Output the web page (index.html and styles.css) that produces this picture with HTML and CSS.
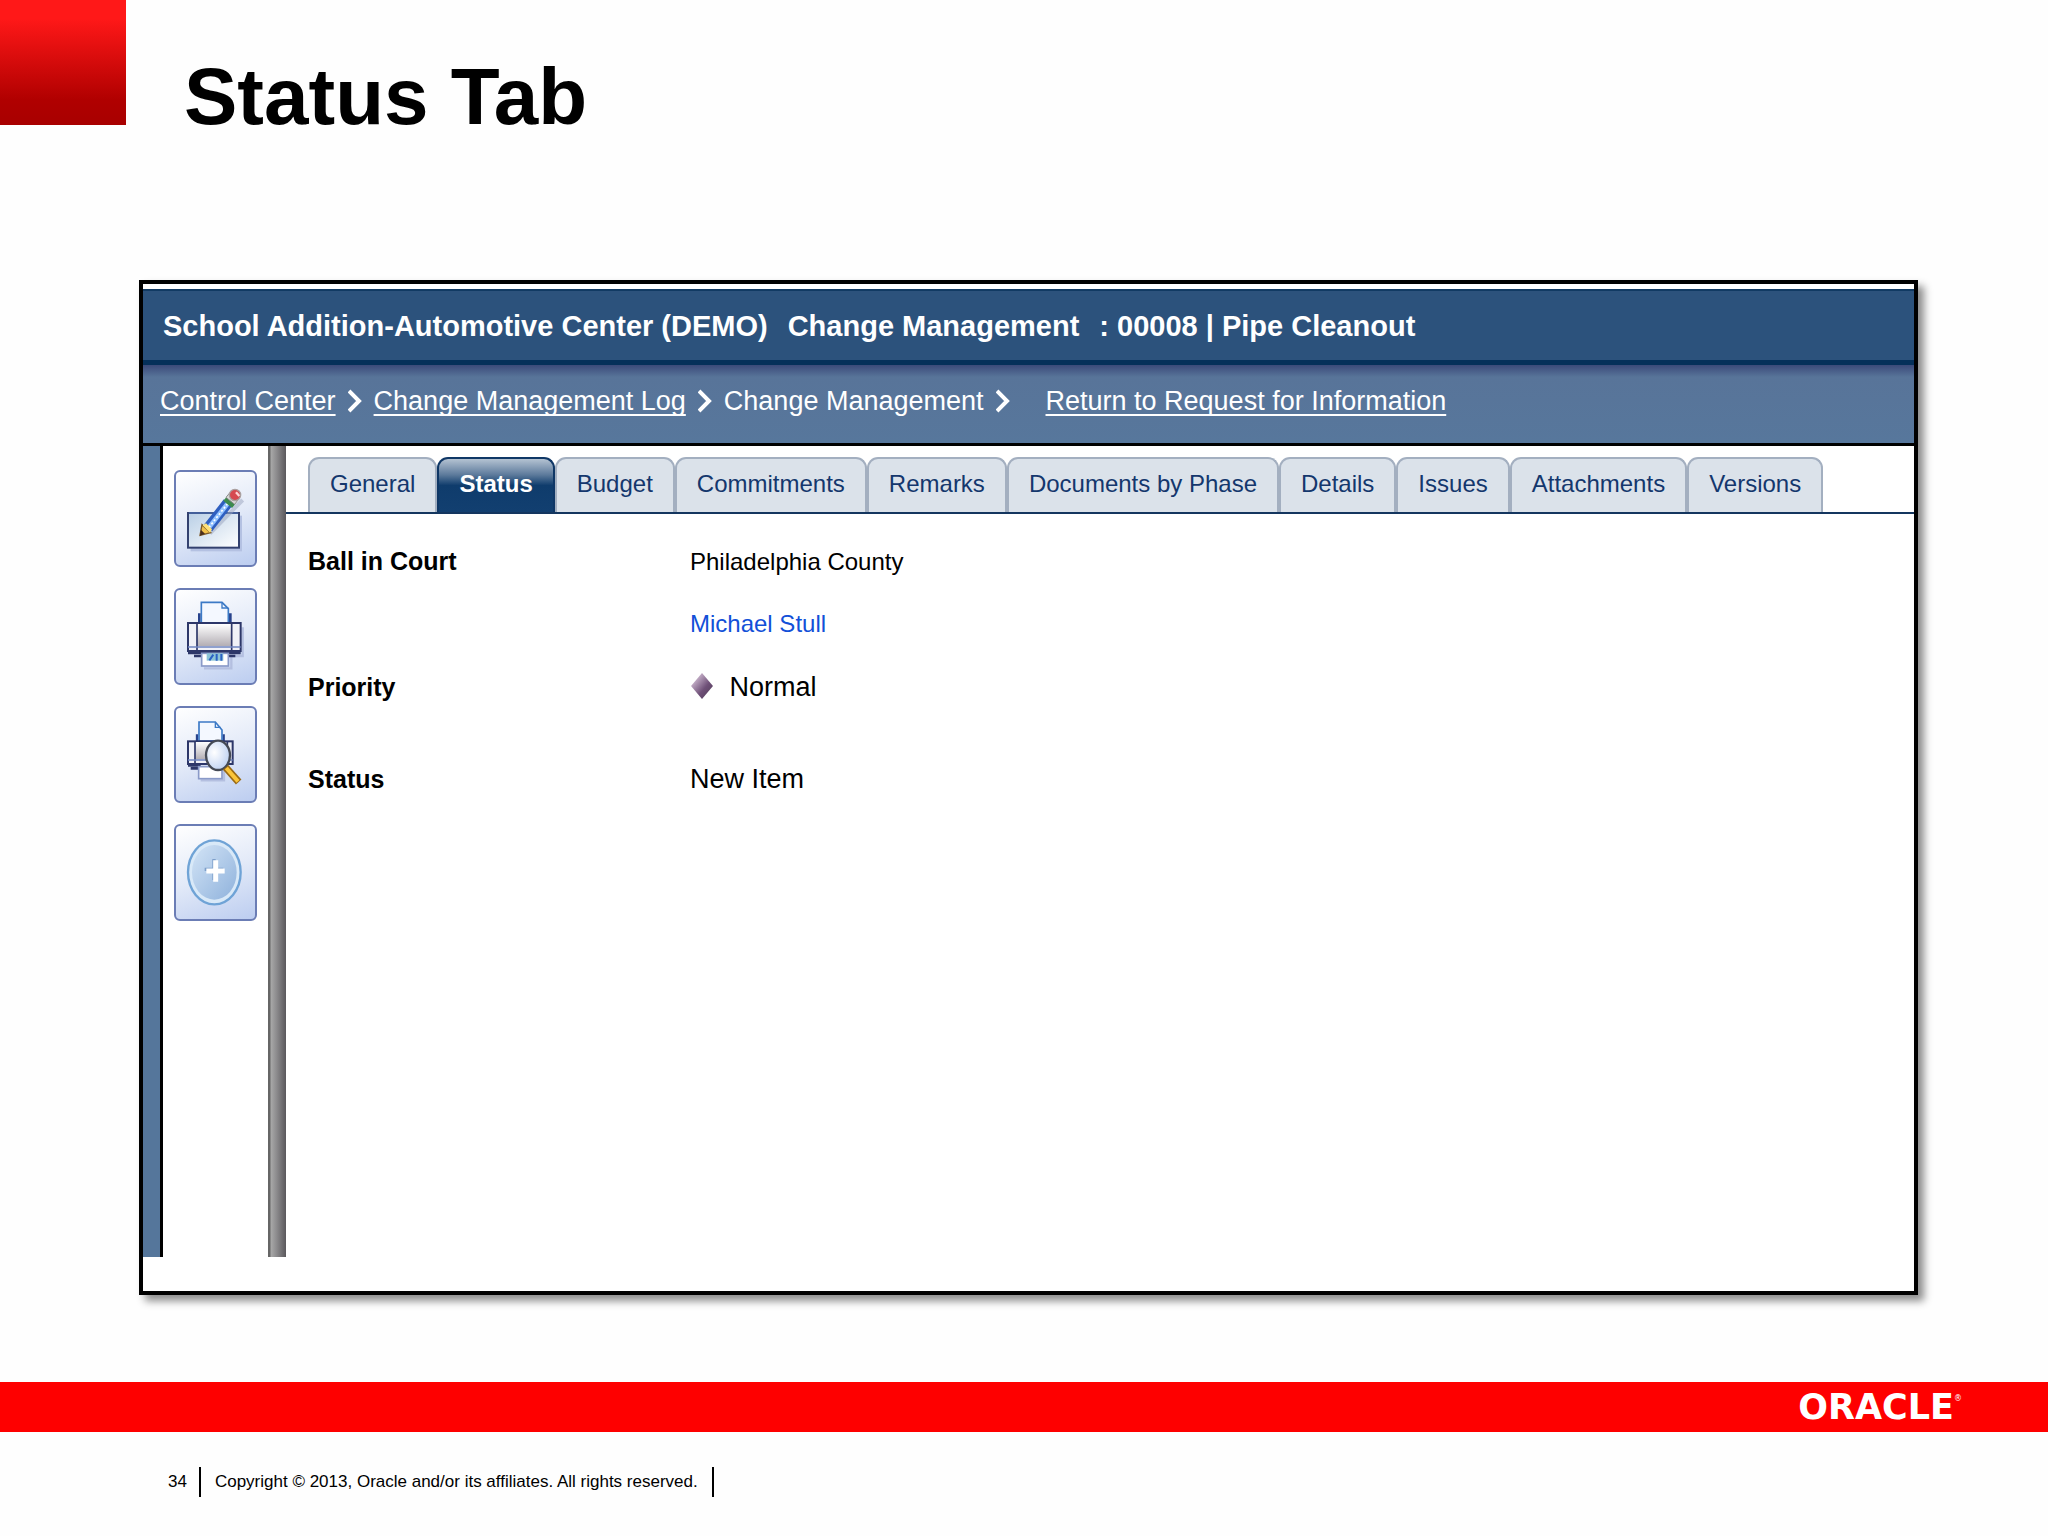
FILE: index.html
```html
<!DOCTYPE html>
<html lang="en">

<head>
    <meta charset="utf-8">
    <title>Status Tab</title>
    <link rel="stylesheet" href="styles.css">
</head>

<body>
    <header class="slide-header">
        <div class="red-square"></div>
        <h1 class="slide-title">Status Tab</h1>
    </header>

    <main class="frame">
        <div class="titlebar">
            <span>School Addition-Automotive Center (DEMO)</span>
            <span>Change Management</span>
            <span>: 00008 | Pipe Cleanout</span>
        </div>

        <nav class="breadcrumb">
            <a href="#">Control Center</a>
            <svg class="chevron" viewBox="0 0 14 26"><path d="M1 3 L11 13 L1 23" /></svg>
            <a href="#">Change Management Log</a>
            <svg class="chevron" viewBox="0 0 14 26"><path d="M1 3 L11 13 L1 23" /></svg>
            <span>Change Management</span>
            <svg class="chevron" viewBox="0 0 14 26"><path d="M1 3 L11 13 L1 23" /></svg>
            <a class="return-link" href="#">Return to Request for Information</a>
        </nav>

        <div class="workspace">
            <div class="sidebar">
                <button class="tool" type="button" aria-label="Edit">
                    <svg viewBox="0 0 249 291">
                        <defs>
                            <linearGradient id="pad" x1="0" y1="0" x2="1" y2="1">
                                <stop offset="0" stop-color="#b9cfe6" />
                                <stop offset="1" stop-color="#ffffff" />
                            </linearGradient>
                        </defs>
                        <rect x="50" y="137" width="154" height="107" fill="#b4c1e2" />
                        <rect x="42" y="129" width="153" height="104" fill="url(#pad)" stroke="#33416f" stroke-width="6" />
                        <path d="M45 129 H192" stroke="#4a6aa8" stroke-width="5" />
                        <path d="M108 190 L206 90" stroke="#9aa3bd" stroke-width="12" opacity=".5" />
                        <path d="M102 174 L162 98" stroke="#2f5fc0" stroke-width="32" />
                        <path d="M105 172 L163 98" stroke="#8fc0ff" stroke-width="14" />
                        <path d="M105 172 L163 98" stroke="#ffffff" stroke-width="5" stroke-dasharray="6 6" />
                        <path d="M78 196 L84 164 L110 188 Z" fill="#f2c14a" stroke="#7c5a2a" stroke-width="4" />
                        <path d="M86 166 L96 160 L114 178 L108 188 Z" fill="#ffe27a" />
                        <path d="M78 197 L81 180 L93 191 Z" fill="#4a2d1e" />
                        <path d="M148 92 L158 80 L184 102 L174 114 Z" fill="#3c8a4e" />
                        <path d="M156 82 L166 70 L192 90 L182 103 Z" fill="#d9d9d9" stroke="#8d8d8d" stroke-width="3" />
                        <ellipse cx="183" cy="75" rx="17" ry="17" fill="#d64a50" stroke="#a9a0a0" stroke-width="4" />
                        <path d="M186 67 L196 78" stroke="#ffd5d5" stroke-width="7" />
                    </svg>
                </button>
                <button class="tool" type="button" aria-label="Print">
                    <svg viewBox="0 0 249 291">
                        <defs>
                            <linearGradient id="body" x1="0" y1="0" x2="0" y2="1">
                                <stop offset="0" stop-color="#ffffff" />
                                <stop offset="1" stop-color="#b3aeb4" />
                            </linearGradient>
                        </defs>
                        <path d="M206 118 V204 H172 V241 H90" fill="none" stroke="#b4bfe0" stroke-width="7" />
                        <path d="M76 76 V105 M169 76 V105" stroke="#27428c" stroke-width="8" />
                        <path d="M82 105 V43 H144 L163 62 V105 Z" fill="#f4f8ff" stroke="#3c7ac6" stroke-width="5" />
                        <path d="M144 43 V60 H163" fill="none" stroke="#3c7ac6" stroke-width="4" />
                        <rect x="42" y="105" width="158" height="84" fill="#f0f1f7" stroke="#2d3769" stroke-width="6" />
                        <rect x="69" y="108" width="103" height="66" fill="url(#body)" />
                        <path d="M69 105 V190 M173 105 V190" stroke="#2d3769" stroke-width="5" />
                        <path d="M42 177 H200" stroke="#6f84c0" stroke-width="5" />
                        <path d="M42 194 H200" stroke="#2d3769" stroke-width="10" />
                        <path d="M60 204 H84 M164 204 H184" stroke="#2d3769" stroke-width="8" />
                        <rect x="83" y="196" width="80" height="38" fill="#ffffff" stroke="#8a9ac8" stroke-width="5" />
                        <rect x="98" y="196" width="50" height="22" fill="#8cc4d6" />
                        <path d="M106 217 L118 200 M128 198 V218 M142 198 V218" stroke="#2b62c4" stroke-width="6" />
                    </svg>
                </button>
                <button class="tool" type="button" aria-label="Print preview">
                    <svg viewBox="0 0 249 291">
                        <defs>
                            <radialGradient id="lens" cx=".35" cy=".4" r=".7">
                                <stop offset="0" stop-color="#ffffff" />
                                <stop offset="1" stop-color="#bcd0f2" />
                            </radialGradient>
                        </defs>
                        <path d="M150 190 V223 H80" fill="none" stroke="#b4bfe0" stroke-width="7" />
                        <path d="M69 85 V105 M149 85 V105" stroke="#27428c" stroke-width="7" />
                        <path d="M75 105 V48 H124 L144 72 V105 Z" fill="#f4f8ff" stroke="#3c7ac6" stroke-width="5" />
                        <path d="M124 48 V64 H140" fill="none" stroke="#3c7ac6" stroke-width="4" />
                        <rect x="42" y="106" width="134" height="68" fill="#f0f1f7" stroke="#2d3769" stroke-width="6" />
                        <rect x="64" y="108" width="90" height="52" fill="url(#body)" />
                        <path d="M63 105 V178 M160 105 V178" stroke="#2d3769" stroke-width="5" />
                        <path d="M42 162 H176" stroke="#6f84c0" stroke-width="4" />
                        <path d="M42 178 H80 M50 187 H76" stroke="#2d3769" stroke-width="8" />
                        <rect x="74" y="182" width="70" height="36" fill="#ffffff" stroke="#8a9ac8" stroke-width="5" />
                        <ellipse cx="132" cy="148" rx="36" ry="44" fill="url(#lens)" stroke="#454a55" stroke-width="7" />
                        <path d="M155 184 L194 228" stroke="#9a6a14" stroke-width="22" />
                        <path d="M157 186 L192 226" stroke="#fbc53a" stroke-width="12" />
                    </svg>
                </button>
                <button class="tool" type="button" aria-label="Add">
                    <svg viewBox="0 0 249 291">
                        <defs>
                            <linearGradient id="disc" x1="0" y1="0" x2="1" y2="1">
                                <stop offset="0" stop-color="#d3e4f6" />
                                <stop offset="1" stop-color="#8fb2dc" />
                            </linearGradient>
                        </defs>
                        <ellipse cx="121" cy="145" rx="79" ry="96" fill="#d9e9f8" stroke="#6fa3d6" stroke-width="7" />
                        <ellipse cx="121" cy="145" rx="67" ry="82" fill="url(#disc)" />
                        <path d="M120 105 V168 M92 136 H148" stroke="#7d9fca" stroke-width="10" />
                        <path d="M125 109 V173 M97 141 H152" stroke="#ffffff" stroke-width="15" />
                    </svg>
                </button>
            </div>
            <div class="splitter"></div>

            <div class="content">
                <nav class="tabs">
                    <a class="tab" href="#">General</a>
                    <a class="tab active" href="#">Status</a>
                    <a class="tab" href="#">Budget</a>
                    <a class="tab" href="#">Commitments</a>
                    <a class="tab" href="#">Remarks</a>
                    <a class="tab" href="#">Documents by Phase</a>
                    <a class="tab" href="#">Details</a>
                    <a class="tab" href="#">Issues</a>
                    <a class="tab" href="#">Attachments</a>
                    <a class="tab" href="#">Versions</a>
                </nav>

                <dl class="fields">
                    <dt>Ball in Court</dt>
                    <dd class="small">Philadelphia County</dd>
                    <dd class="small"><a href="#">Michael Stull</a></dd>
                    <dt>Priority</dt>
                    <dd>
                        <svg class="diamond" viewBox="0 0 24 26">
                            <defs>
                                <linearGradient id="gem" x1="0" y1="0" x2="1" y2="1">
                                    <stop offset="0.2" stop-color="#c9b4cc" />
                                    <stop offset="0.6" stop-color="#6f5078" />
                                    <stop offset="1" stop-color="#4c3a52" />
                                </linearGradient>
                            </defs>
                            <path d="M12 0 L23 13 L12 26 L1 13 Z" fill="url(#gem)" />
                        </svg>
                        Normal
                    </dd>
                    <dt class="last">Status</dt>
                    <dd class="last">New Item</dd>
                </dl>
            </div>
        </div>
    </main>

    <footer>
        <div class="red-band">
            <span class="logo">ORACLE<sup>®</sup></span>
        </div>
        <div class="copyright">
            <span class="page-number">34</span>
            <span class="notice">Copyright © 2013, Oracle and/or its affiliates. All rights reserved.</span>
        </div>
    </footer>
</body>

</html>
```
FILE: styles.css
```css
body {
    margin: 0;
    background-color: #fefefe;
    color: black;
    font-family: "Liberation Sans", Arial, sans-serif;
}

.slide-header {
    display: flex;
    height: 280px;
}

.red-square {
    width: 126px;
    height: 125px;
    background: linear-gradient(#ff1818 15%, #b00000 80%, #a80000);
}

.slide-title {
    margin: 51px 0 0 58px;
    font-size: 80px;
    line-height: 92px;
}

/* application window */
.frame {
    margin: 0 130px 0 139px;
    padding: 5px 0 34px;
    border: 4px solid black;
    background-color: white;
    box-shadow: 6px 6px 8px rgba(0, 0, 0, 0.45);
}

.titlebar {
    display: flex;
    gap: 20px;
    padding: 15px 20px 14px;
    border-top: 2px solid #113a63;
    border-bottom: 5px solid #05305a;
    background-color: #2c527c;
    color: white;
    font-size: 29px;
    font-weight: bold;
    line-height: 40px;
}

.breadcrumb {
    display: flex;
    align-items: center;
    gap: 12px;
    padding: 16px 17px 22px;
    border-bottom: 3px solid black;
    background: linear-gradient(#3b4a7a, #587499 12px, #57779c);
    color: white;
    font-size: 27px;
    line-height: 40px;
}

.breadcrumb a {
    color: white;
    text-underline-offset: 4px;
    text-decoration-thickness: 2px;
    text-decoration-skip-ink: none;
}

.breadcrumb .return-link {
    margin-left: 24px;
}

.chevron {
    width: 14px;
    height: 26px;
    fill: none;
    stroke: white;
    stroke-width: 4px;
}

.workspace {
    display: flex;
    min-height: 811px;
    border-left: 17px solid #55769b;
}

.sidebar {
    display: flex;
    flex-direction: column;
    flex-shrink: 0;
    gap: 21px;
    padding: 24px 11px;
    border-left: 3px solid black;
}

.tool {
    width: 83px;
    height: 97px;
    padding: 0;
    border: 2px solid #6b7db5;
    border-radius: 6px;
    background: linear-gradient(160deg, #ffffff, #e3eaf8 50%, #bccdf0);
}

.tool svg {
    display: block;
    width: 83px;
    height: 97px;
    margin: -2px;
    fill: none;
}

.splitter {
    flex-shrink: 0;
    width: 18px;
    background: linear-gradient(90deg, #666 0, #666 2px, #a8a8a8 3px, #8a898b 50%, #5a585c);
}

.content {
    flex: 1;
}

.tabs {
    display: flex;
    padding: 11px 22px 0;
    border-bottom: 2px solid #14365f;
}

.tab {
    padding: 9px 20px 12px;
    border: 2px solid #a3afc0;
    border-bottom: 0;
    border-radius: 11px 11px 0 0;
    background-color: #dbe2ea;
    color: #14376d;
    font-size: 24px;
    line-height: 32px;
    text-decoration: none;
    white-space: nowrap;
}

.tab.active {
    border-color: #0f3766;
    background: linear-gradient(#b4c2d2, #5c7a9b 30%, #0f3c6c 50%, #123f70);
    color: white;
    font-weight: bold;
}

.fields {
    display: grid;
    grid-template-columns: 382px 1fr;
    grid-auto-rows: 63px;
    align-items: baseline;
    margin: 29px 22px;
    line-height: 36px;
}

.fields dt {
    grid-column: 1;
    font-size: 25px;
    font-weight: bold;
}

.fields dd {
    grid-column: 2;
    margin: 0;
    font-size: 27px;
}

.fields .small {
    font-size: 24px;
}

.fields a {
    color: #1250d8;
    text-decoration: none;
}

.fields .last {
    padding-top: 29px;
}

.diamond {
    width: 24px;
    height: 26px;
    margin-right: 8px;
    vertical-align: -3px;
}

.red-band {
    display: flex;
    align-items: center;
    justify-content: flex-end;
    height: 50px;
    margin-top: 87px;
    padding-right: 86px;
    background-color: #fe0000;
}

.logo {
    color: white;
    font-family: "DejaVu Sans", sans-serif;
    font-size: 35px;
    font-weight: bold;
}

.logo sup {
    font-size: 8px;
    font-weight: normal;
    vertical-align: 18px;
}

.copyright {
    display: flex;
    margin: 35px 0 0 168px;
    font-size: 17px;
    line-height: 30px;
}

.page-number {
    padding-right: 12px;
}

.notice {
    padding: 0 14px;
    border: solid black;
    border-width: 0 2px;
}
```
